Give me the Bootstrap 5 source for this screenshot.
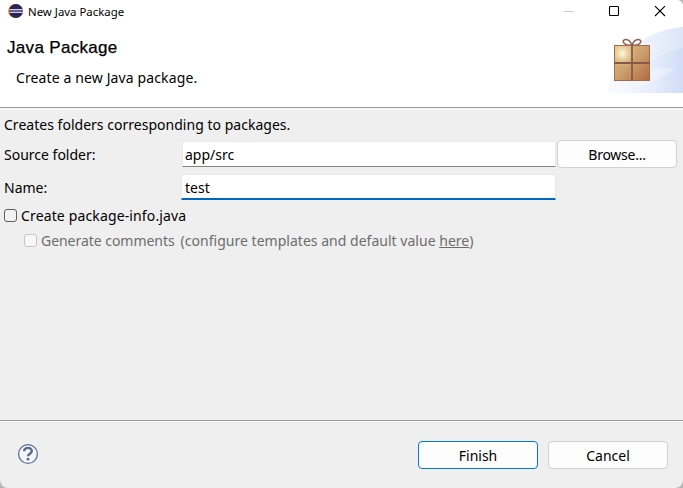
<!DOCTYPE html>
<html lang="en">
<head>
<meta charset="utf-8">
<title>New Java Package</title>
<link rel="stylesheet" href="https://cdn.jsdelivr.net/npm/bootstrap@5.3.0/dist/css/bootstrap.min.css">
<style>
body { background: #b5b5b5; font-family: "Noto Sans", sans-serif; font-size: 14px; line-height: 20px; color: #000; }
.dialog { width: 683px; height: 488px; background: #efefef; border-radius: 0 6px 8px 8px; }
.titlebar { height: 23px; padding-left: 8px; background: #fff; font-size: 11.4px; }
.titlebar .caption { margin-left: 5px; }
.win-btn { width: 46px; }
.banner { height: 85px; background: #fff; border-bottom: 1px solid #9b9b9b; }
.banner h1 { font: 500 17px/20px "Liberation Sans", sans-serif; letter-spacing: .32px; margin: 15px 0 0 7px; -webkit-text-stroke: .25px #000; }
.banner p { margin: 10px 0 0 16px; letter-spacing: .12px; }
.banner-art { margin-top: 4px; }
.form-area { height: 312px; padding: 5px 6px 0 4px; border-top: 2px solid #f8f8f8; }
.intro { letter-spacing: .02px; }
.source-row { margin-top: 5px; }
.name-row { margin-top: 6px; margin-bottom: 6px; }
.check-row { margin-top: 5px; }
.field-label { width: 178px; padding-top: 1px; }
.form-area .form-control { width: 374px; height: 26px; border: 1px solid #e8e8e8; border-bottom-color: #858585; border-radius: 1px; padding: 1px 2px 0; font-size: 14px; line-height: 20px; color: #000; box-shadow: none; }
.form-area .form-control.active-field { width: 375px; margin-left: -1px; padding-left: 3px; border-bottom: 2px solid #0067c0; }
.dialog .btn { --bs-btn-font-size: 14px; --bs-btn-line-height: 20px; --bs-btn-padding-y: 0; --bs-btn-padding-x: 0; --bs-btn-bg: #fdfdfd; --bs-btn-color: #000; --bs-btn-border-color: #d0d0d0; --bs-btn-border-radius: 4px; width: 120px; height: 28px; padding-top: 1px; }
.dialog .btn.default-btn { --bs-btn-border-color: #0078d4; }
.dialog .btn.browse-btn { letter-spacing: -.25px; }
.cancel-btn { margin-left: 10px; }
.dialog .form-check-input { width: 13px; height: 13px; margin: -2px 4px 0 0; border: 1px solid #5f5f5f; border-radius: 3px; background-color: #f3f3f3; }
.dialog .form-check-input:disabled { border-color: #c4c4c4; background-color: #f8f8f8; opacity: 1; }
.info-label { letter-spacing: .14px; }
.disabled-row { color: #6d6d6d; letter-spacing: -.04px; }
.disabled-row a { color: inherit; }
.template-note { margin-left: 6px; letter-spacing: .02px; }
.footer-bar { height: 68px; padding: 20px 15px 0 17px; border-top: 1px solid #9b9b9b; box-shadow: inset 0 1px #fff; }
.help-icon { margin-top: 2px; }
</style>
<script src="https://cdn.jsdelivr.net/npm/bootstrap@5.3.0/dist/js/bootstrap.bundle.min.js"></script>
</head>
<body>
<div class="dialog overflow-hidden">
  <header class="titlebar d-flex align-items-center">
    <svg width="15" height="15" viewBox="0 0 15 15"><circle cx="7" cy="7" r="7" fill="#f4a13a"/><circle cx="8" cy="7" r="7" fill="#2c2255"/><path d="M1.500 5.500H14.700M1.500 8.500H14.700" stroke="#d4d1e4" stroke-width="1.200"/><path d="M1 7H15" stroke="#6a6396" stroke-width="1.800"/></svg>
    <span class="caption">New Java Package</span>
    <div class="ms-auto d-flex">
      <svg class="win-btn" height="23" viewBox="0 0 46 23"><path d="M19 11.5h10" stroke="#ccc"/></svg>
      <svg class="win-btn" height="23" viewBox="0 0 46 23"><rect x="18.5" y="6.5" width="9" height="9" rx=".8" fill="none" stroke="#000" stroke-width="1.100"/></svg>
      <svg class="win-btn" height="23" viewBox="0 0 46 23"><path d="M18 6.2l10 9.8M28 6.2L18 16" stroke="#000" stroke-width="1.15"/></svg>
    </div>
  </header>
  <section class="banner d-flex">
    <div class="flex-grow-1">
      <h1>Java Package</h1>
      <p>Create a new Java package.</p>
    </div>
    <svg class="banner-art" width="75" height="66" viewBox="0 0 75 66">
      <defs>
        <linearGradient id="sky" x1="0" x2="1"><stop offset="0" stop-color="#fafbff"/><stop offset=".55" stop-color="#ecf1fc"/><stop offset="1" stop-color="#dde6f9"/></linearGradient>
        <linearGradient id="sky2" x1="0" x2="1"><stop offset="0" stop-color="#f4f7fe" stop-opacity=".3"/><stop offset="1" stop-color="#c9d8f4"/></linearGradient>
        <linearGradient id="box" x1="0" y1="0" x2="1" y2="1"><stop offset="0" stop-color="#dfbd83"/><stop offset=".5" stop-color="#cc9f6c"/><stop offset="1" stop-color="#b3683e"/></linearGradient>
        <radialGradient id="shine" cx=".22" cy=".22" r=".4"><stop offset="0" stop-color="#fffbe2"/><stop offset="1" stop-color="#efd596" stop-opacity="0"/></radialGradient>
      </defs>
      <path d="M0 66C1 54 4 46 10 38C24 18 45 2 75 0V66z" fill="url(#sky)"/>
      <path d="M28 50C40 34 54 25 75 21V66H16z" fill="url(#sky2)" opacity=".65"/>
      <path d="M30 44C44 42 56 41 67 41C56 51 41 57 28 60z" fill="#fff" opacity=".3"/>
      <path d="M23.500 18C19 19 14 16 15.500 13.500C18 11 23 13.500 23.500 18M24.500 18C25 13.500 30 11 32.500 13.500C34 16 29 19 24.500 18" fill="none" stroke="#8d6151" stroke-width="1.500"/>
      <rect x="6.500" y="18.500" width="35" height="35" fill="url(#box)" stroke="#a26c50"/>
      <rect x="7" y="19" width="34" height="34" fill="url(#shine)"/>
      <path d="M24 18V54M6 36H42" stroke="#865a48" stroke-width="1.8"/>
    </svg>
  </section>
  <main class="form-area">
    <div class="intro">Creates folders corresponding to packages.</div>
    <div class="source-row d-flex align-items-center">
      <label class="field-label" for="source">Source folder:</label>
      <input id="source" class="form-control" value="app/src">
      <button class="btn browse-btn ms-auto" type="button">Browse...</button>
    </div>
    <div class="name-row d-flex align-items-center">
      <label class="field-label" for="pkg">Name:</label>
      <input id="pkg" class="form-control active-field" value="test">
    </div>
    <div class="check-row d-flex align-items-center">
      <input class="form-check-input" type="checkbox" id="info"><label class="info-label" for="info">Create package-info.java</label>
    </div>
    <div class="check-row d-flex align-items-center disabled-row ps-3 ms-1">
      <input class="form-check-input" type="checkbox" id="comments" disabled><span>Generate comments</span>
      <span class="template-note">(configure templates and default value <a href="#">here</a>)</span>
    </div>
  </main>
  <footer class="footer-bar d-flex align-items-start">
    <svg class="help-icon" width="22" height="22" viewBox="0 0 22 22"><circle cx="11" cy="11" r="9.400" fill="#f4f6f9" stroke="#5c7096" stroke-width="1.300"/><path d="M7.200 8.200C7.200 3.800 14.800 3.900 14.800 8C14.800 10.700 11 10.700 11 13.300" fill="none" stroke="#566b92" stroke-width="2.400"/><circle cx="11" cy="16.200" r="1.400" fill="#566b92"/></svg>
    <button class="btn default-btn ms-auto" type="button">Finish</button>
    <button class="btn cancel-btn" type="button">Cancel</button>
  </footer>
</div>
</body>
</html>
